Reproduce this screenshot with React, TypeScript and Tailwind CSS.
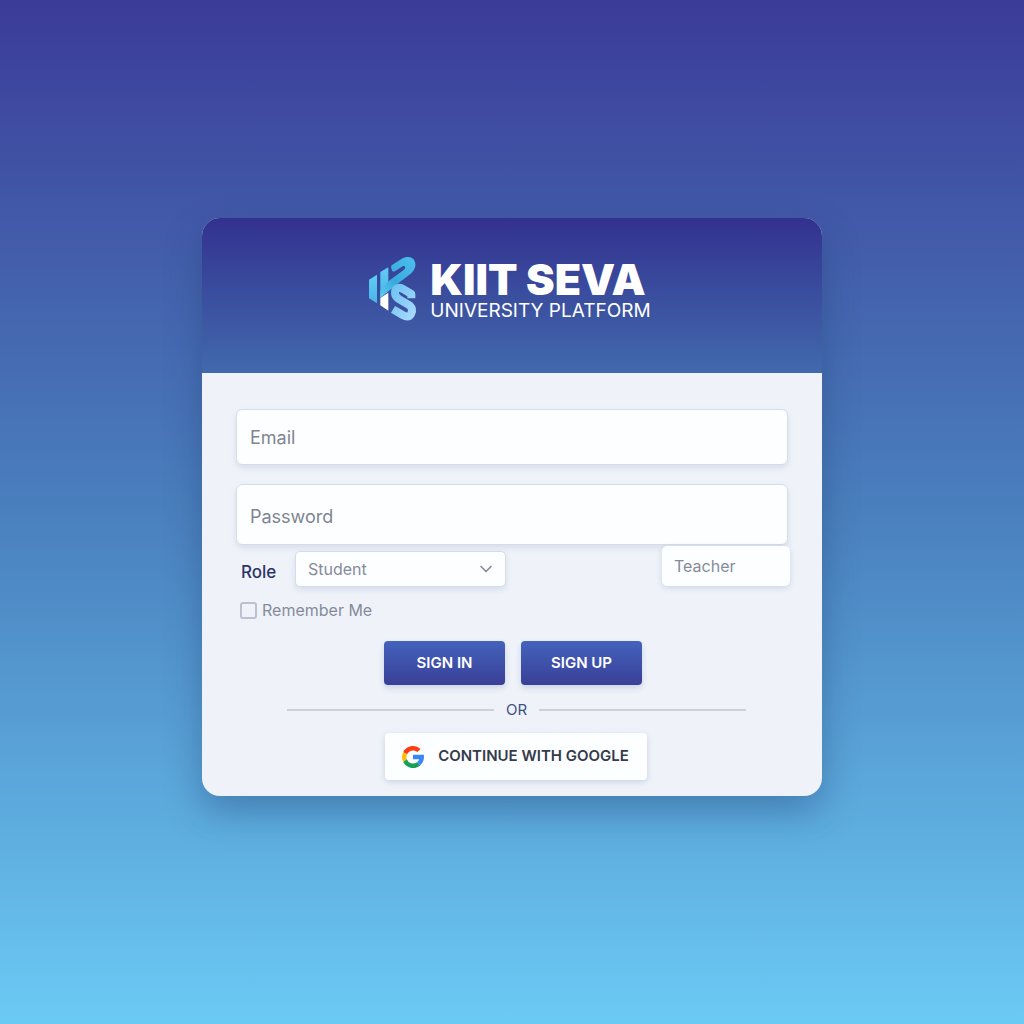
import React from "react";
import { ChevronDown } from "lucide-react";

function Logo() {
  return (
    <svg viewBox="0 0 144 198" className="h-[66px] w-12 shrink-0" aria-hidden="true">
      <defs>
        <linearGradient id="bar" x1="0" y1="0" x2="0" y2="1">
          <stop offset="0" stopColor="#62cdf4" />
          <stop offset="1" stopColor="#48b4e8" />
        </linearGradient>
        <linearGradient id="hook" x1="1" y1="0" x2="0" y2="1">
          <stop offset="0" stopColor="#4cc0f0" />
          <stop offset="0.6" stopColor="#38a9dc" />
          <stop offset="1" stopColor="#5ccdf2" />
        </linearGradient>
        <linearGradient id="ess" x1="0" y1="0" x2="1" y2="1">
          <stop offset="0" stopColor="#6fc3f4" />
          <stop offset="1" stopColor="#a5d8fb" />
        </linearGradient>
      </defs>
      <path d="M0 71 L24 56 V142 L0 127 Z" fill="url(#bar)" />
      <path d="M34 48 L58 34 V104 L34 124 Z" fill="url(#bar)" />
      <path d="M34 126 L58 110 V164 L34 148 Z" fill="#ffffff" />
      <path
        d="M66 33 Q66 29 70 26 L101 7 C117 -1 134 4 138 18 C142 32 136 44 125 53 L80 88 L34 126 V104 L58 76 L104 42 C112 35 108 28 101 31 L78 46 Q72 48 69 44 Z"
        fill="url(#hook)"
      />
      <path
        d="M127 127 V114 L104 100 C90 91 77 97 78 111 C78 120 83 125 91 130 L118 146 C130 153 132 163 126 174 C120 185 110 182 101 177 L72 160"
        fill="none"
        stroke="url(#ess)"
        strokeWidth="24"
        strokeLinejoin="round"
      />
    </svg>
  );
}

function GoogleMark() {
  return (
    <svg viewBox="4 4 40 40" className="size-[22px] shrink-0" aria-hidden="true">
      <path fill="#ff3d12" d="M6.3 14.7l6.6 4.8C14.7 15.1 19 12 24 12c3.1 0 5.8 1.2 8 3l5.7-5.7C34 6.1 29.3 4 24 4 16.3 4 9.7 8.3 6.3 14.7z" />
      <path fill="#ffc107" d="M6.3 14.7C4.8 17.5 4 20.6 4 24s.8 6.4 2.3 9.2l6.6-5.1A12 12 0 0 1 12.9 19.5z" />
      <path fill="#18a05a" d="M24 44c5.2 0 9.9-2 13.4-5.2l-6.2-5.2A12 12 0 0 1 12.8 28l-6.5 5.1C9.6 39.6 16.2 44 24 44z" />
      <path fill="#3b86f7" d="M43.6 20H24v8h11.3a12 12 0 0 1-4.1 5.6l6.2 5.2C37 39.2 44 34 44 24c0-1.3-.1-2.7-.4-4z" />
    </svg>
  );
}

const field =
  "block w-full rounded-md border border-[#d6dce9] bg-[#fdfeff] px-[13px] text-lg text-[#7f8591] shadow-[0_3px_6px_rgba(70,90,150,0.14)] outline-none placeholder:text-[#7f8591] placeholder:opacity-100";

const primary =
  "h-11 w-[121px] rounded bg-linear-to-b from-[#4463bd] to-[#393f97] pt-px text-[15px] font-semibold text-white shadow-[0_3px_6px_rgba(60,80,150,0.2)]";

export default function App() {
  return (
    <div className="flex min-h-screen items-center justify-center bg-linear-to-b from-[#3b3b98] via-[#4a80be] to-[#6bcaf4] px-4 pb-[10px] font-['Inter',sans-serif]">
      <main className="w-full max-w-[620px] overflow-hidden rounded-[18px] bg-[#eff3f9] shadow-[0_16px_36px_rgba(30,60,110,0.38)]">
        <header className="flex h-[155px] items-start justify-center gap-[13px] bg-linear-to-b from-[#33318f] to-[#4269ad] pt-[38px] pr-1">
          <Logo />
          <div className="text-white">
            <h1 className="text-[43px] leading-[46px] font-black">KIIT SEVA</h1>
            <p className="text-[19px] leading-[18px]">UNIVERSITY PLATFORM</p>
          </div>
        </header>

        <form className="px-[34px] pt-9 pb-4" onSubmit={(e) => e.preventDefault()}>
          <input type="email" aria-label="Email" placeholder="Email" className={`${field} h-14`} />
          <input type="password" aria-label="Password" placeholder="Password" className={`${field} mt-[19px] h-[61px] pt-1`} />

          <div className="flex items-start justify-between">
            <div className="flex items-center pt-1.5 pl-[5px]">
              <label htmlFor="role" className="w-[54px] pt-2 text-[17px] font-medium text-[#2c356b]">
                Role
              </label>
              <div className="relative">
                <select
                  id="role"
                  defaultValue="Student"
                  className="block h-9 w-[211px] appearance-none rounded-[5px] border border-[#d6dce9] bg-[#fdfeff] pr-9 pl-3 text-base text-[#858b9b] shadow-[0_3px_6px_rgba(70,90,150,0.14)] outline-none"
                >
                  <option>Student</option>
                  <option>Teacher</option>
                </select>
                <ChevronDown className="pointer-events-none absolute top-2 right-2.5 size-5 text-[#858b9b]" aria-hidden="true" />
              </div>
            </div>
            <input
              type="text"
              aria-label="Teacher"
              placeholder="Teacher"
              className="-mr-0.5 mt-px h-10 w-32 rounded-[5px] bg-[#fdfeff] px-3 text-base shadow-[0_2px_6px_rgba(70,90,150,0.2)] outline-none placeholder:text-[#858b9b] placeholder:opacity-100"
            />
          </div>

          <label className="mt-[11px] ml-1 flex w-fit items-center gap-[5px] text-base text-[#858b9b]">
            <input type="checkbox" className="size-[17px] appearance-none rounded-[3px] border-2 border-[#bcc1cf] checked:bg-[#4463bd]" />
            Remember Me
          </label>

          <div className="mt-[19px] flex justify-center gap-4 pl-0.5">
            <button type="submit" className={primary}>SIGN IN</button>
            <button type="button" className={primary}>SIGN UP</button>
          </div>

          <div className="mt-[15px] mr-[42px] ml-[51px] flex items-center gap-3 text-[15px] leading-5 text-[#3f4f87]">
            <span className="h-0.5 flex-1 bg-[#cbd1dd]" />
            OR
            <span className="h-0.5 flex-1 bg-[#cbd1dd]" />
          </div>

          <div className="mt-[13px] flex justify-center pl-[7px]">
            <button
              type="button"
              className="flex h-[47px] w-[262px] items-center justify-center gap-3.5 rounded bg-[#fdfeff] text-[15px] font-semibold text-[#343b4c] shadow-[0_2px_6px_rgba(70,90,150,0.22)]"
            >
              <GoogleMark />
              CONTINUE WITH GOOGLE
            </button>
          </div>
        </form>
      </main>
    </div>
  );
}
